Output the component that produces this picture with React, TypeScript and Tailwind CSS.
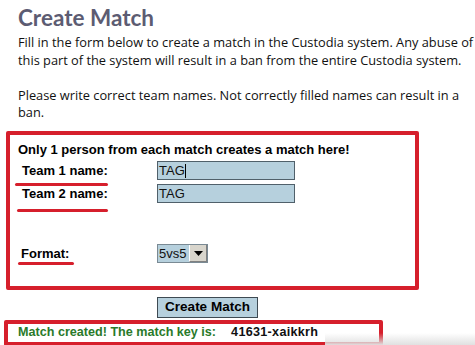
import React from "react";

const red = "bg-[#d61f2c]";

function Underline({ left, width, top }: { left: number; width: number; top: number }) {
  return (
    <div
      className={`absolute h-[3px] rounded-full ${red}`}
      style={{ left, width, top }}
    />
  );
}

export default function App() {
  return (
    <div className="relative w-[475px] h-[345px] overflow-hidden bg-white">
      <div className="pl-[18px] pt-[4px]">
        <h1 className="text-[22.5px] leading-[28px] font-bold text-[#5c5c72] [font-family:'Lato',sans-serif]">
          Create Match
        </h1>
        <div className="text-[12.8px] leading-[17.5px] text-[#111] whitespace-nowrap [font-family:'Open_Sans',sans-serif] pt-[2px]">
          <p>Fill in the form below to create a match in the Custodia system. Any abuse of</p>
          <p>this part of the system will result in a ban from the entire Custodia system.</p>
          <p className="h-[17.5px]"></p>
          <p>Please write correct team names. Not correctly filled names can result in a</p>
          <p>ban.</p>
        </div>
      </div>

      <div className="mt-[9px] ml-[6px] w-[413px] h-[159px] border-4 border-[#d61f2c] rounded-[2px] [font-family:'Liberation_Sans',Arial,sans-serif]">
        <div className="pl-[8px] pt-[7px] text-[13px] font-bold text-black leading-[16px]">
          Only 1 person from each match creates a match here!
        </div>
        <div className="relative">
          <div className="flex items-center h-[24px] pt-[2px]">
            <div className="w-[147px] pl-[12px] text-[13px] font-bold text-black">Team 1 name:</div>
            <div className="relative w-[138px] h-[19px] bg-[#b6d0dd] border border-[#50606a] text-[13px] leading-[17px] pl-[1px] text-[#111]">
              TAG
              <span className="absolute left-[27px] top-[2px] w-px h-[14px] bg-black" />
            </div>
          </div>
          <div className="flex items-center h-[24px]">
            <div className="w-[147px] pl-[12px] text-[13px] font-bold text-black">Team 2 name:</div>
            <div className="w-[138px] h-[19px] bg-[#b6d0dd] border border-[#50606a] text-[13px] leading-[17px] pl-[1px] text-[#111]">
              TAG
            </div>
          </div>
          <div className="flex items-center h-[60px] pt-[36px]">
            <div className="w-[147px] pl-[11px] text-[13px] font-bold text-black">Format:</div>
            <div className="flex w-[51px] h-[19px] bg-[#b6d0dd] border border-[#7a8a94] text-[13px] leading-[17px] text-[#111]">
              <span className="w-[31px] pl-[1px]">5vs5</span>
              <span className="flex-1 flex items-center justify-center bg-[#d8d5cc] border-l border-white border-r border-b border-r-[#808080] border-b-[#808080]">
                <svg width="9" height="5" viewBox="0 0 9 5">
                  <path d="M0 0h9L4.5 5z" fill="#000" />
                </svg>
              </span>
            </div>
          </div>
          <Underline left={5} width={93} top={25} />
          <Underline left={7} width={91} top={51} />
          <Underline left={8} width={56} top={104} />
        </div>
      </div>

      <div className="flex pl-[157px] pt-[7px] [font-family:'Liberation_Sans',Arial,sans-serif]">
        <div className="w-[101px] h-[21px] bg-[#b6d0dd] border border-[#3e4a52] flex items-center justify-center text-[13.5px] font-bold text-black">
          Create Match
        </div>
      </div>

      <div className="mt-[2px] ml-[4px] w-[379px] h-[26px] border-4 border-[#d61f2c] rounded-[2px] flex items-center pl-[10px] text-[12.6px] font-bold [font-family:'Liberation_Sans',Arial,sans-serif]">
        <span className="text-[#2a7a2a]">Match created! The match key is:</span>
        <span className="ml-[15px] text-[#111] tracking-[0.3px]">41631-xaikkrh</span>
      </div>

      <div className="absolute right-0 bottom-0 w-[150px] h-[12px] bg-gradient-to-b from-transparent to-[#e0e0e0] pointer-events-none" />
    </div>
  );
}
